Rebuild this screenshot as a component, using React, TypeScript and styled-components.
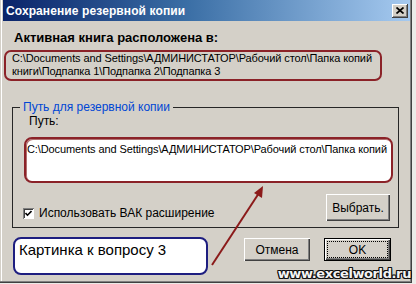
import React from 'react'
import styled, { createGlobalStyle } from 'styled-components'

const Global = createGlobalStyle`
  html, body { margin: 0; padding: 0; background: #ecebe8; }
  body { width: 416px; height: 284px; overflow: hidden; }
  * { box-sizing: border-box; }
`

const UI = `'Liberation Sans', Arial, sans-serif`

const Window = styled.div`
  position: relative;
  width: 412px;
  height: 283px;
  background: #d4d0c8;
  padding: 0 2px 2px 3px;
  box-shadow: inset -1px -1px #404040, inset -2px -2px #808080, inset 1px 0 #d4d0c8, inset 2px 0 #ffffff;
  font-family: ${UI};
  font-size: 12px;
  color: #000;
`

const TitleBar = styled.div`
  height: 21px;
  display: flex;
  align-items: center;
  justify-content: space-between;
  padding: 0 2px 0 3px;
  background: linear-gradient(to right, #0a246a 0%, #3a6ea5 45%, #a6caf0 100%);
`

const Title = styled.span`
  color: #fff;
  font-weight: bold;
  font-size: 12px;
  letter-spacing: 0.1px;
`

const CloseBtn = styled.div`
  width: 16px;
  height: 14px;
  display: flex;
  align-items: center;
  justify-content: center;
  background: #d4d0c8;
  box-shadow: inset -1px -1px #404040, inset 1px 1px #ffffff, inset -2px -2px #808080;
`

const Body = styled.div`
  padding-left: 1px;
  display: flex;
  flex-direction: column;
`

const Heading = styled.div`
  margin: 8px 0 0 10px;
  font-size: 13px;
  font-weight: bold;
  line-height: 17px;
`

const PathBox = styled.div`
  margin-top: 4px;
  width: 378px;
  height: 31px;
  border: 2px solid #8b2228;
  border-radius: 7px;
  padding: 0 0 0 6px;
  font-size: 11px;
  letter-spacing: -0.1px;
  line-height: 13px;
`

const Group = styled.fieldset`
  margin: 19px 0 0 8px;
  width: 387px;
  padding: 0 0 6px 0;
  border: 1px solid #262626;
  display: flex;
  flex-direction: column;
`

const Legend = styled.legend`
  margin-left: 7px;
  padding: 0 3px;
  color: #0046d5;
  font-size: 12px;
  line-height: 14px;
`

const Label = styled.div`
  margin: 0 0 0 16px;
  line-height: 14px;
`

const TextField = styled.div`
  margin: 9px 0 0 11px;
  width: 369px;
  height: 46px;
  background: #fff;
  border: 2px solid #8b2228;
  border-radius: 8px;
  box-shadow: inset 1px 1px #b07070;
  padding: 3px 0 0 1px;
  font-size: 11px;
  letter-spacing: -0.1px;
  line-height: 14px;
  white-space: nowrap;
  overflow: hidden;
`

const Row = styled.div`
  margin: 11px 8px 0 10px;
  display: flex;
  align-items: flex-start;
  justify-content: space-between;
`

const Check = styled.label`
  margin-top: 12px;
  display: flex;
  align-items: center;
  gap: 5px;
  line-height: 14px;
`

const CheckBox = styled.span`
  width: 11px;
  height: 11px;
  background: #fff;
  box-shadow: inset 1px 1px #808080, inset -1px -1px #ffffff, inset 2px 2px #404040;
  display: flex;
  align-items: center;
  justify-content: center;
`

const Button = styled.div<{ $w: number; $h: number; $default?: boolean }>`
  width: ${p => p.$w}px;
  height: ${p => p.$h}px;
  display: flex;
  align-items: center;
  justify-content: center;
  background: #d4d0c8;
  font-size: 12px;
  box-shadow: ${p =>
    p.$default
      ? 'inset 0 0 0 1px #000, inset 2px 2px #fff, inset -2px -2px #404040, inset -3px -3px #808080'
      : 'inset 1px 1px #fff, inset -1px -1px #404040, inset -2px -2px #808080'};
`

const Focus = styled.span`
  display: flex;
  align-items: center;
  justify-content: center;
  width: calc(100% - 8px);
  height: calc(100% - 8px);
  outline: 1px dotted #000;
`

const BottomRow = styled.div`
  margin: 9px 0 0 9px;
  display: flex;
  align-items: flex-start;
`

const Note = styled.div`
  width: 195px;
  height: 38px;
  background: #fff;
  border: 2px solid #1e1e80;
  border-radius: 8px;
  padding: 2px 0 0 4px;
  font-size: 15px;
  line-height: 18px;
`

const Buttons = styled.div`
  margin: 1px 0 0 36px;
  display: flex;
  gap: 14px;
`

const Arrow = styled.svg`
  position: absolute;
  left: 0;
  top: 0;
  pointer-events: none;
`

const Watermark = styled.div`
  position: absolute;
  right: 1px;
  bottom: 2px;
  font-family: 'DejaVu Sans', sans-serif;
  font-weight: bold;
  font-size: 13px;
  letter-spacing: -0.4px;
  color: #f4f4f4;
  text-shadow: 1px 0 #111, -1px 0 #111, 0 1px #111, 0 -1px #111, 1px 1px #111, -1px -1px #111, 1px -1px #111, -1px 1px #111;
`

export default function App() {
  return (
    <>
      <Global />
      <Window>
        <TitleBar>
          <Title>Сохранение резервной копии</Title>
          <CloseBtn>
            <svg width="8" height="7" viewBox="0 0 8 7">
              <path d="M0.5 0.5 L7.5 6.5 M7.5 0.5 L0.5 6.5" stroke="#000" strokeWidth="1.7" />
            </svg>
          </CloseBtn>
        </TitleBar>
        <Body>
          <Heading>Активная книга расположена в:</Heading>
          <PathBox>
            C:\Documents and Settings\АДМИНИСТАТОР\Рабочий стол\Папка копий
            <br />
            книги\Подпапка 1\Подпапка 2\Подпапка 3
          </PathBox>
          <Group>
            <Legend>Путь для резервной копии</Legend>
            <Label>Путь:</Label>
            <TextField>C:\Documents and Settings\АДМИНИСТАТОР\Рабочий стол\Папка копий</TextField>
            <Row>
              <Check>
                <CheckBox>
                  <svg width="7" height="7" viewBox="0 0 7 7">
                    <path d="M0.5 3 L2.5 5.2 L6.5 1" stroke="#000" strokeWidth="1.6" fill="none" />
                  </svg>
                </CheckBox>
                Использовать ВАК расширение
              </Check>
              <Button $w={64} $h={27}>Выбрать.</Button>
            </Row>
          </Group>
          <BottomRow>
            <Note>Картинка к вопросу 3</Note>
            <Buttons>
              <Button $w={66} $h={23}>Отмена</Button>
              <Button $w={67} $h={23} $default>
                <Focus>OK</Focus>
              </Button>
            </Buttons>
          </BottomRow>
        </Body>
        <Arrow width="412" height="283">
          <line x1="212" y1="265" x2="259" y2="193" stroke="#8b1a1a" strokeWidth="2" />
          <polygon points="263,186 262,198 254,193" fill="#8b1a1a" />
        </Arrow>
        <Watermark>www.excelworld.ru</Watermark>
      </Window>
    </>
  )
}
